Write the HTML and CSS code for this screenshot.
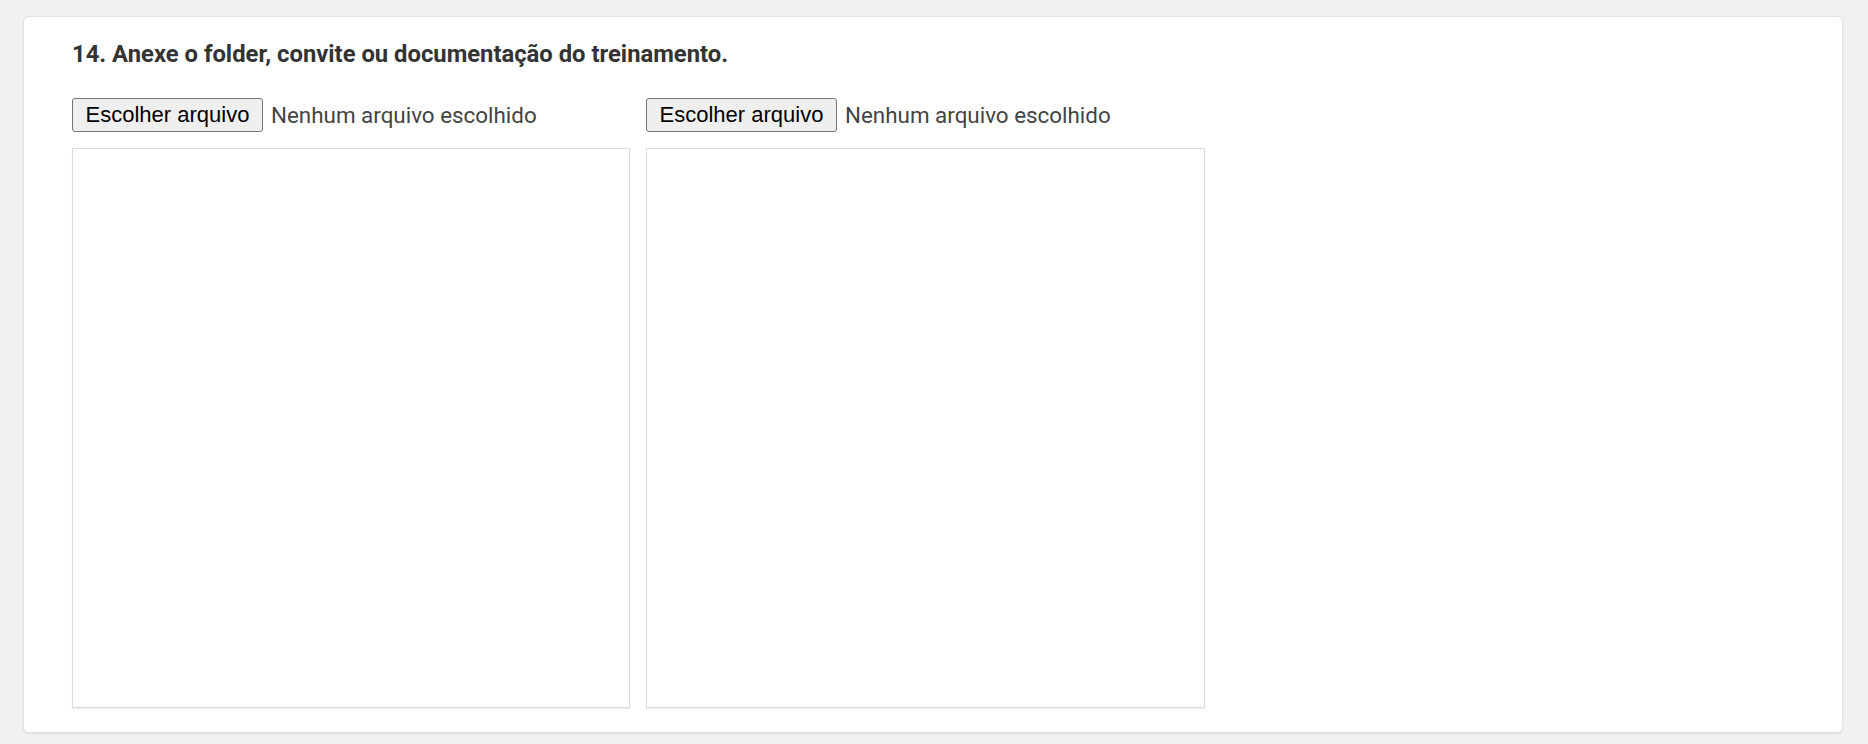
FILE: index.html
```html
<!DOCTYPE html>
<html lang="pt-BR">

<head>
    <meta charset="UTF-8">
    <meta name="viewport" content="width=device-width, initial-scale=1.0">
    <title>Anexos</title>
    <link rel="stylesheet" href="styles.css">
</head>

<body>
    <div class="card">
        <h2 class="question">14. Anexe o folder, convite ou documentação do treinamento.</h2>
        <div class="uploads">
            <div class="upload">
                <div class="picker">
                    <button type="button" class="pick-btn">Escolher arquivo</button>
                    <span class="pick-name">Nenhum arquivo escolhido</span>
                </div>
                <div class="preview"></div>
            </div>
            <div class="upload">
                <div class="picker">
                    <button type="button" class="pick-btn">Escolher arquivo</button>
                    <span class="pick-name">Nenhum arquivo escolhido</span>
                </div>
                <div class="preview"></div>
            </div>
        </div>
    </div>
</body>

</html>
```

FILE: styles.css
```css
* {
    margin: 0;
    padding: 0;
    box-sizing: border-box;
}

body {
    background: #f1f1f1;
    font-family: Roboto, "Liberation Sans", sans-serif;
    color: #333;
    padding: 16px 25px 11px 23px;
}

.card {
    background: #fff;
    border: 1px solid #e2e2e2;
    border-radius: 6px;
    box-shadow: 0 1px 2px rgba(0, 0, 0, 0.08);
    padding: 23px 48px 24px 48px;
    height: 717px;
}

.question {
    font-size: 23.8px;
    font-weight: 700;
    line-height: 28px;
    color: #333;
}

.uploads {
    display: flex;
    gap: 16px;
    margin-top: 30px;
}

.upload {
    display: flex;
    flex-direction: column;
    gap: 16px;
}

.upload:first-child {
    width: 558px;
}

.upload:last-child {
    width: 559px;
}

.picker {
    display: flex;
    align-items: center;
    gap: 8px;
}

.pick-btn {
    font-family: "Liberation Sans", Arial, sans-serif;
    font-size: 22px;
    color: #000;
    height: 34px;
    width: 191px;
    background: #efefef;
    border: 1px solid #767676;
    border-radius: 3px;
}

.pick-name {
    font-size: 22.4px;
    color: #444;
}

.preview {
    height: 560px;
    border: 1px solid #dcdcdc;
    box-shadow: 0 1px 1px rgba(0, 0, 0, 0.07);
}
```
